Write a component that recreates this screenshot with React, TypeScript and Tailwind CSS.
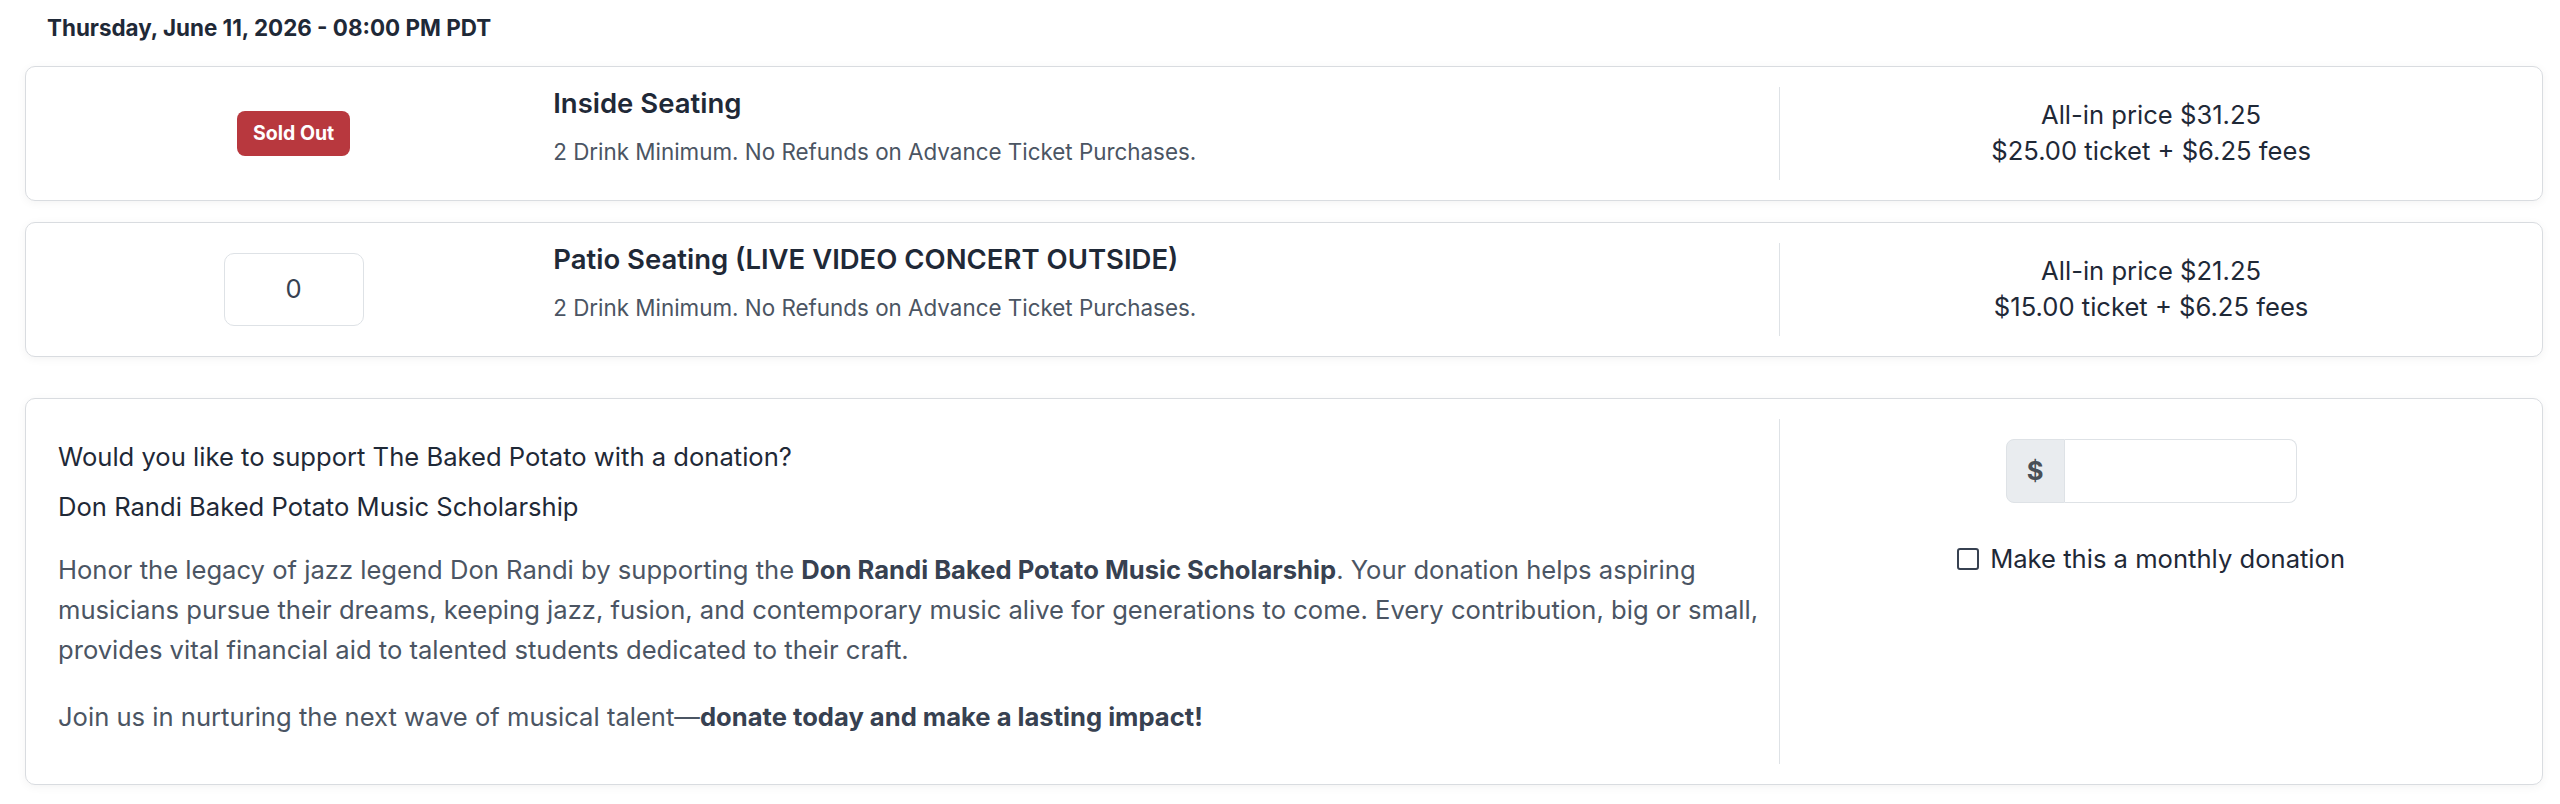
const ink = "text-[#1f2937]";

function TicketRow({
  left,
  title,
  desc,
  price,
  breakdown,
}: {
  left: React.ReactNode;
  title: string;
  desc: string;
  price: string;
  breakdown: string;
}) {
  return (
    <div className="flex rounded-[10px] border border-[#d9dce0] bg-white p-[20px] shadow-[0_2px_10px_rgba(0,0,0,0.05)]">
      <div className="flex w-[20%] items-center justify-center px-3">{left}</div>
      <div className="w-[50%] px-3">
        <h3 className={`text-[27.5px] font-semibold leading-[32px] ${ink}`}>{title}</h3>
        <p className="mt-[17px] mb-[13px] text-[22.4px] leading-[31px] text-[#4b5563]">{desc}</p>
      </div>
      <div className={`flex w-[30%] flex-col items-center justify-center border-l border-[#dee2e6] px-3 pb-[2px] text-center text-[25.6px] leading-[36px] ${ink}`}>
        <div>All-in price {price}</div>
        <div>{breakdown}</div>
      </div>
    </div>
  );
}

export default function App() {
  const desc = "2 Drink Minimum. No Refunds on Advance Ticket Purchases.";

  return (
    <div className="min-h-screen bg-white pl-[25px] pr-[17px] font-[Inter,sans-serif]">
      <h2 className={`pt-[10px] pl-[22px] text-[22.4px] font-bold leading-[35px] ${ink}`}>
        Thursday, June 11, 2026 - 08:00 PM PDT
      </h2>

      <div className="mt-[21px] flex flex-col gap-[21px]">
        <TicketRow
          left={
            <span className="rounded-[8px] bg-[#b8383e] px-[16px] py-[9px] text-[19.5px] font-bold leading-[27px] text-white">
              Sold Out
            </span>
          }
          title="Inside Seating"
          desc={desc}
          price="$31.25"
          breakdown="$25.00 ticket + $6.25 fees"
        />
        <TicketRow
          left={
            <div className="flex h-[73px] w-[140px] items-center justify-center rounded-[10px] border border-[#dee2e6] bg-white text-[25.6px] text-[#374151]">
              0
            </div>
          }
          title="Patio Seating (LIVE VIDEO CONCERT OUTSIDE)"
          desc={desc}
          price="$21.25"
          breakdown="$15.00 ticket + $6.25 fees"
        />
      </div>

      {/* Donation */}
      <div className="mt-[41px] flex rounded-[10px] border border-[#d9dce0] bg-white p-[20px] shadow-[0_2px_10px_rgba(0,0,0,0.05)]">
        <div className="w-[70%] px-3 pt-[18px] text-[25.6px] leading-[39px]">
          <p className={ink}>Would you like to support The Baked Potato with a donation?</p>
          <p className={`mt-[11px] ${ink}`}>Don Randi Baked Potato Music Scholarship</p>
          <p className="mt-[24px] leading-[40px] text-[#4b5563]">
            Honor the legacy of jazz legend Don Randi by supporting the{" "}
            <strong className="font-bold text-[#374151]">Don Randi Baked Potato Music Scholarship</strong>. Your
            donation helps aspiring musicians pursue their dreams, keeping jazz, fusion, and contemporary music alive
            for generations to come. Every contribution, big or small, provides vital financial aid to talented
            students dedicated to their craft.
          </p>
          <p className="mt-[27px] mb-[28px] text-[#4b5563]">
            Join us in nurturing the next wave of musical talent—
            <strong className="font-bold text-[#374151]">donate today and make a lasting impact!</strong>
          </p>
        </div>

        <div className="flex w-[30%] flex-col items-center border-l border-[#dee2e6] px-3 pt-[20px]">
          <div className="flex h-[64px] w-[291px]">
            <span className="flex w-[59px] items-center justify-center rounded-l-[8px] border border-[#dee2e6] bg-[#e9ecef] text-[25.6px] font-bold text-[#495057]">
              $
            </span>
            <input
              type="text"
              className="min-w-0 flex-1 rounded-r-[8px] border border-l-0 border-[#dee2e6] bg-white px-3 text-[25.6px] outline-none"
            />
          </div>
          <label className={`mt-[36px] flex items-center gap-[11px] text-[25.6px] leading-[39px] ${ink}`}>
            <span className="h-[22px] w-[22px] rounded-[3px] border-2 border-[#374151] bg-white" />
            Make this a monthly donation
          </label>
        </div>
      </div>
    </div>
  );
}
